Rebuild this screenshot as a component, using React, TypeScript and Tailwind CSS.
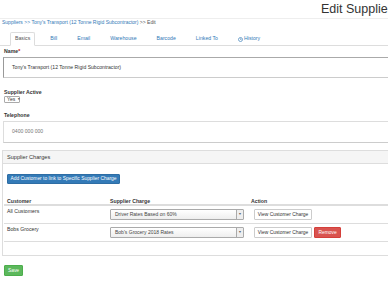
import React from 'react'

const tabs = ['Basics', 'Bill', 'Email', 'Warehouse', 'Barcode', 'Linked To', 'History']

const charges = [
  { customer: 'All Customers', charge: 'Driver Rates Based on 60%', removable: false },
  { customer: 'Bobs Grocery', charge: "Bob's Grocery 2018 Rates", removable: true },
]

const ClockIcon = () => (
  <svg width="5" height="5" viewBox="0 0 10 10" className="mr-[1px]">
    <circle cx="5" cy="5" r="4" fill="none" stroke="#337ab7" strokeWidth="1.3" />
    <path d="M5 2.6V5h2" fill="none" stroke="#337ab7" strokeWidth="1.2" />
  </svg>
)

const ChargeSelect = ({ value }: { value: string }) => (
  <div className="ml-[3px] flex h-[11px] w-[134px] items-center rounded-[1px] border border-[#aaa] bg-gradient-to-b from-white to-[#eee]">
    <span className="flex-1 pl-[4px] text-[5px] leading-none text-[#444]">{value}</span>
    <span className="flex h-full w-[7px] items-center justify-center border-l border-[#aaa] bg-[#eee] text-[3.5px] text-[#666]">
      ▼
    </span>
  </div>
)

export default function App() {
  return (
    <div className="h-[284px] w-[388px] overflow-hidden bg-white font-['Liberation_Sans',Arial,sans-serif] text-[#333]">
      <div className="w-[430px]">
        {/* page header */}
        <div className="h-[19px] border-b border-[#eee] pl-[321px]">
          <h1 className="whitespace-nowrap pt-[3px] text-[12.5px] leading-[13px] text-[#333]">Edit Supplier</h1>
        </div>

        <div className="px-[2px] text-[5px] leading-[6px]">
          <span className="text-[#337ab7]">Suppliers</span>
          <span className="text-[#337ab7]"> &gt;&gt; </span>
          <span className="text-[#337ab7]">Tony's Transport (12 Tonne Rigid Subcontractor)</span>
          <span className="text-[#555]"> &gt;&gt; Edit</span>
        </div>

        {/* tabs */}
        <div className="mt-[7px] flex gap-[10px] border-b border-[#ddd] pl-[10px]">
          {tabs.map((t, i) => (
            <div
              key={t}
              className={
                i === 0
                  ? '-mb-px flex h-[14px] items-center rounded-t-[2px] border border-[#ddd] border-b-white bg-white px-[4px] text-[5.2px] text-[#555]'
                  : '-mb-px flex h-[14px] items-center border border-transparent px-[4px] text-[5.2px] text-[#337ab7]'
              }
            >
              {t === 'History' && <ClockIcon />}
              {t}
            </div>
          ))}
        </div>

        <div className="px-[3px]">
          <div className="mt-[2px] pl-[1px] text-[5.2px] font-bold leading-[6px]">
            Name<span className="text-[#c00]">*</span>
          </div>
          <div className="mt-[3px] flex h-[21px] items-center border border-[#ccc] border-l-[#999] border-t-[#aaa] pl-[8px] text-[5.1px] text-[#333]">
            Tony's Transport (12 Tonne Rigid Subcontractor)
          </div>

          <div className="mt-[11px] pl-[1px] text-[5.2px] font-bold leading-[6px]">Supplier Active</div>
          <div className="ml-[1px] mt-[1px] flex h-[7px] w-[16px] items-center gap-[2px] rounded-[1px] border border-[#aaa] bg-white pl-[2px] text-[5px] leading-none text-[#333]">
            <span>Yes</span>
            <span className="text-[3px]">▼</span>
          </div>

          <div className="mt-[9px] pl-[1px] text-[5.2px] font-bold leading-[6px]">Telephone</div>
          <div className="mt-[3px] flex h-[22px] items-center border border-[#ddd] border-b-[#ccc] pl-[8px] text-[5.1px] text-[#777]">
            0400 000 000
          </div>

          {/* supplier charges panel */}
          <div className="-ml-px mt-[7px] border border-[#ddd]">
            <div className="flex h-[13px] items-center border-b border-[#ddd] bg-[#f5f5f5] pl-[4px] text-[5.6px]">
              Supplier Charges
            </div>
            <div className="px-[1px] pb-[13px] pt-[10px]">
              <div className="ml-[3px] flex h-[10px] w-[113px] items-center justify-center rounded-[1px] border border-[#2e6da4] bg-[#337ab7] text-[4.9px] text-white">
                Add Customer to link to Specific Supplier Charge
              </div>

              <div className="mt-[13px]">
                <div className="flex border-b-2 border-[#ddd] pt-[1px] text-[5.2px] font-bold leading-[6px]">
                  <div className="w-[103px] px-[3px]">Customer</div>
                  <div className="w-[141px] px-[3px]">Supplier Charge</div>
                  <div className="px-[3px]">Action</div>
                </div>
                {charges.map((r) => (
                  <div key={r.customer} className="flex h-[18px] border-b border-[#ddd]">
                    <div className="w-[103px] px-[3px] pt-[2px] text-[5.2px] leading-[6px]">{r.customer}</div>
                    <div className="w-[141px] pt-[3px]">
                      <ChargeSelect value={r.charge} />
                    </div>
                    <div className="flex gap-[2px] pl-[6px] pt-[3px]">
                      <div className="flex h-[11px] w-[58px] items-center justify-center rounded-[1px] border border-[#ccc] bg-white text-[4.9px] text-[#333]">
                        View Customer Charge
                      </div>
                      {r.removable && (
                        <div className="flex h-[11px] w-[27px] items-center justify-center rounded-[1px] border border-[#d43f3a] bg-[#d9534f] text-[4.9px] text-white">
                          Remove
                        </div>
                      )}
                    </div>
                  </div>
                ))}
              </div>
            </div>
          </div>

          <div className="ml-[1px] mt-[9px] flex h-[11px] w-[19px] items-center justify-center rounded-[1px] border border-[#4cae4c] bg-[#5cb85c] text-[4.9px] text-white">
            Save
          </div>
        </div>
      </div>
    </div>
  )
}
